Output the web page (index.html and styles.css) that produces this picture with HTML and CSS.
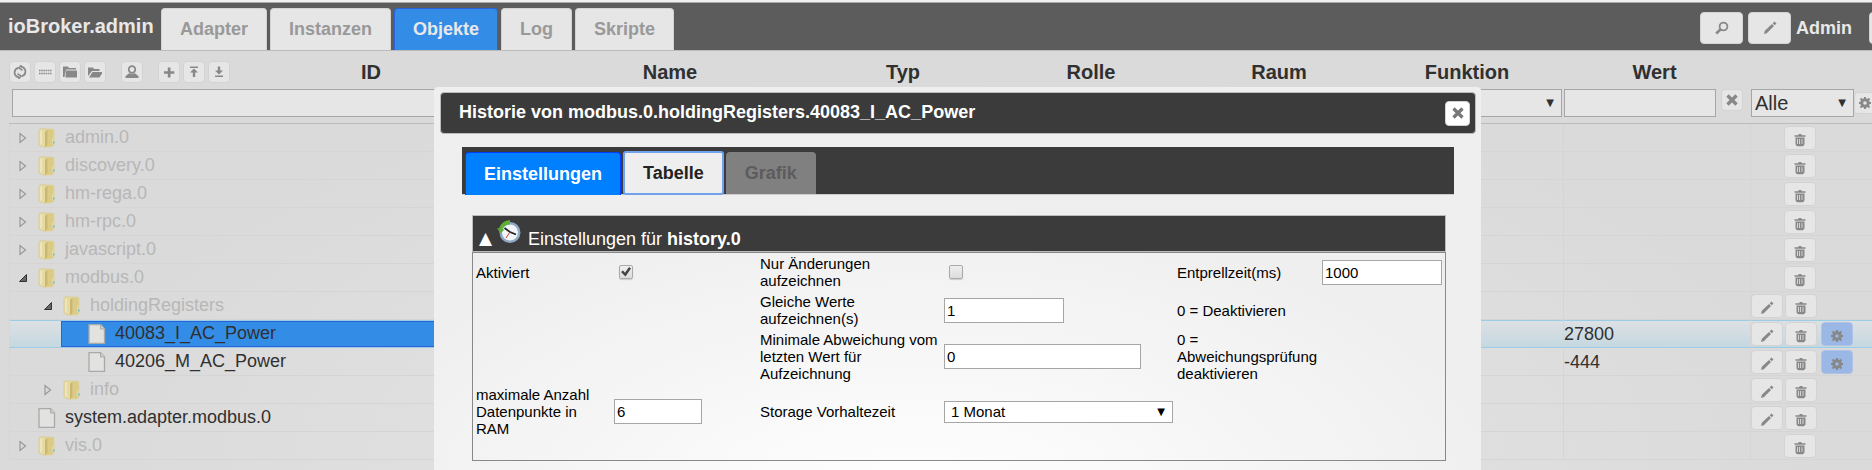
FILE: index.html
```html
<!DOCTYPE html>
<html lang="de">
<head>
    <meta charset="UTF-8">
    <meta name="viewport" content="width=device-width, initial-scale=1.0">
    <title>ioBroker.admin</title>
    <link rel="stylesheet" href="styles.css">
</head>
<body>
    <svg class="sprite" aria-hidden="true">
        <symbol id="i-refresh" viewBox="0 0 14 14"><path d="M6 12.300C2.500 11.500 1.300 9 1.700 6.500 2 4.500 3 3.300 5.500 2.900M8 1.700C11.500 2.500 12.700 5 12.300 7.500 12 9.500 11 10.700 8.500 11.100" fill="none" stroke="currentColor" stroke-width="1.700"/><path d="M8.500 0 6 2.800 9.500 5.300M5.500 14 8 11.200 4.500 8.700" fill="none" stroke="currentColor" stroke-width="1.500"/></symbol>
        <symbol id="i-list" viewBox="0 0 14 14"><path d="M1 5.500h12.500M1 8.500h12.500" stroke="currentColor" stroke-width="1.500" stroke-dasharray="1.500 .7"/></symbol>
        <symbol id="i-folder" viewBox="0 0 14 14"><path d="M0 12V1.500h5l1 1.500h7V4.500H3L1.500 12z"/><path d="M3 5.500h11v7H2.500z"/></symbol>
        <symbol id="i-open" viewBox="0 0 14 14"><path d="M0 11V2.500h5l1 1.500h5.500V6H4z"/><path d="M4.500 7H15l-3.500 5.500H1z"/></symbol>
        <symbol id="i-person" viewBox="0 0 14 14"><circle cx="7" cy="4.500" r="3.300" fill="none" stroke="currentColor" stroke-width="1.700"/><path d="M4 8.300l3 1 3-1 3.500 3V13H.500v-1.700z"/></symbol>
        <symbol id="i-plus" viewBox="0 0 14 14"><path d="M5.800 2.500h2.700v3.700h3.800v2.600H8.500v3.700H5.800V8.800H2V6.200h3.800z"/></symbol>
        <symbol id="i-up" viewBox="0 0 14 14"><path d="M3 1.500h8V3H3zM7 3.500l4 4H8.200V12H5.800V7.500H3z"/></symbol>
        <symbol id="i-down" viewBox="0 0 14 14"><path d="M3 10.500h8V12H3zM7 9.500l4-4H8.200V1.500H5.800v4H3z"/></symbol>
        <symbol id="i-search" viewBox="0 0 14 14"><circle cx="8.500" cy="5.500" r="3.900" fill="none" stroke="currentColor" stroke-width="1.800"/><path d="M5.700 8.300 1.200 12.500" stroke="currentColor" stroke-width="2.600"/></symbol>
        <symbol id="i-pencil" viewBox="0 0 14 14"><path d="M1 13l.8-3.200L9 3l2 2-7.200 7.200zM9.700 2.300 11.500.500l2 2-1.800 1.800z"/></symbol>
        <symbol id="i-trash" viewBox="0 0 14 14"><path d="M1.500 2.200h3.700L5.700 1h2.600l.5 1.200h3.700v1.500h-11z"/><path fill-rule="evenodd" d="M2.500 4.500h9v7l-1.500 1.800H4L2.500 11.500zM4 6v5h.8V6zm2.200 0v5H7V6zm2.400 0v5h.8V6z"/></symbol>
        <symbol id="i-close" viewBox="0 0 14 14"><path d="M2.500 2.500l9 9M11.500 2.500l-9 9" stroke="currentColor" stroke-width="3.300"/></symbol>
        <symbol id="i-gear" viewBox="0 0 14 14"><circle cx="7" cy="7" r="3.300" fill="none" stroke="currentColor" stroke-width="3"/><path d="M7 1v2.500M7 10.500V13M1 7h2.500M10.500 7H13M2.500 2.500l2 2M9.500 9.500l2 2M2.500 11.500l2-2M9.500 4.500l2-2" stroke="currentColor" stroke-width="2"/></symbol>
        <symbol id="i-dir" viewBox="0 0 18 20">
            <path d="M8 1h6.500Q16 1 16 3v14l-2 2H8z" fill="#dccb84" stroke="#ddd2a4"/>
            <path d="M1 2.500Q1 1 3 .800h4L9.500 2v15L7 19.500 1 17.500z" fill="#e4dba4" stroke="#dacd96"/>
            <path d="M7 3.500 9.500 2v15L7 19.500z" fill="#ccb76c"/>
            <path d="M3 2.500v14" stroke="#f0e9c3" stroke-width="1.500"/>
            <path d="M14 10.500h3v6h-3z" fill="#dcd7b0"/><path d="M15 13.500h1.500v2H15z" fill="#6cc0b5"/>
        </symbol>
        <symbol id="i-file" viewBox="0 0 18 20"><path d="M1 .500h11.500l4 4.500v14.500H1z" fill="#e2e2e0" stroke="#a9a9a7" stroke-width="1.300"/><path d="M12.500.500V5h4" fill="#cfcfcd" stroke="#a9a9a7"/></symbol>
        <symbol id="i-closed" viewBox="0 0 8 12"><path d="M1 1.500v9L6.500 6z" fill="none" stroke="#999" stroke-width="1.200"/></symbol>
        <symbol id="i-expanded" viewBox="0 0 8 12"><path d="M7.500 2.500v7H.5z" fill="#666" stroke="#333"/></symbol>
        <symbol id="i-clock" viewBox="0 0 24 24">
            <circle cx="13" cy="12.500" r="10.500" fill="#8fa9c4"/><circle cx="13" cy="12.500" r="8" fill="#f2f5f7"/>
            <path d="M13 0A12.500 12 0 0 0 2 8.500L0 8l3.500 5.500L7.500 9.300 5.300 9A8.500 8.500 0 0 1 13 4.500z" fill="#5fae35"/>
            <path d="M7.500 8 13 12l6 2.500" fill="none" stroke="#222" stroke-width="1.800"/><path d="M13 12 9 18" stroke="#c33" stroke-width="1"/>
        </symbol>
    </svg>

    <div class="menu-bar">
        <h1 class="menu-title">ioBroker.admin</h1>
        <div class="tabs">
            <button class="tab">Adapter</button>
            <button class="tab">Instanzen</button>
            <button class="tab active">Objekte</button>
            <button class="tab">Log</button>
            <button class="tab">Skripte</button>
        </div>
        <div class="menu-right">
            <button class="btn menu-btn" aria-label="Suchen"><svg><use href="#i-search"/></svg></button>
            <button class="btn menu-btn" aria-label="Bearbeiten"><svg><use href="#i-pencil"/></svg></button>
            <span class="user-name">Admin</span>
            <button class="btn menu-btn user-btn" aria-label="Abmelden"></button>
        </div>
    </div>

    <table class="objects">
        <colgroup>
            <col>
            <col class="col-name">
            <col class="col-prop">
            <col class="col-prop">
            <col class="col-prop">
            <col class="col-prop">
            <col class="col-value">
            <col class="col-actions">
        </colgroup>
        <thead>
            <tr class="titles">
                <th>
                    <div class="id-head">
                        <div class="toolbar">
                            <button class="btn tool" aria-label="Aktualisieren"><svg><use href="#i-refresh"/></svg></button>
                            <button class="btn tool" aria-label="Liste"><svg><use href="#i-list"/></svg></button>
                            <button class="btn tool" aria-label="Alle zuklappen"><svg><use href="#i-folder"/></svg></button>
                            <button class="btn tool" aria-label="Alle aufklappen"><svg><use href="#i-open"/></svg></button>
                            <button class="btn tool group" aria-label="Experte"><svg><use href="#i-person"/></svg></button>
                            <button class="btn tool group" aria-label="Neu"><svg><use href="#i-plus"/></svg></button>
                            <button class="btn tool" aria-label="Import"><svg><use href="#i-up"/></svg></button>
                            <button class="btn tool" aria-label="Export"><svg><use href="#i-down"/></svg></button>
                        </div>
                        <span class="id-title">ID</span>
                    </div>
                </th>
                <th>Name</th>
                <th>Typ</th>
                <th>Rolle</th>
                <th>Raum</th>
                <th>Funktion</th>
                <th>Wert</th>
                <th></th>
            </tr>
            <tr class="filters">
                <td class="filter-id"><input type="text" class="filter" aria-label="ID"></td>
                <td></td>
                <td></td>
                <td></td>
                <td></td>
                <td><div class="select"><select class="filter" aria-label="Funktion"><option></option></select></div></td>
                <td>
                    <div class="filter-row">
                        <input type="text" class="filter" aria-label="Wert">
                        <button class="btn tool" aria-label="Filter leeren"><svg><use href="#i-close"/></svg></button>
                    </div>
                </td>
                <td class="filter-history">
                    <div class="filter-row tight">
                        <div class="select"><select class="filter" aria-label="Historie"><option>Alle</option></select></div>
                        <button class="btn tool" aria-label="Einstellungen"><svg><use href="#i-gear"/></svg></button>
                    </div>
                </td>
            </tr>
        </thead>
        <tbody id="tree"></tbody>
    </table>

    <div class="dialog" role="dialog" aria-labelledby="dialogTitle">
        <div class="dialog-title">
            <h2 id="dialogTitle">Historie von modbus.0.holdingRegisters.40083_I_AC_Power</h2>
            <button class="btn close-btn" aria-label="Schließen"><svg><use href="#i-close"/></svg></button>
        </div>
        <div class="dialog-body">
            <div class="tabs dialog-tabs">
                <button class="tab active">Einstellungen</button>
                <button class="tab focused">Tabelle</button>
                <button class="tab" disabled>Grafik</button>
            </div>
            <div class="instance">
                <div class="instance-head">
                    <span class="fold">▲</span>
                    <svg class="clock"><use href="#i-clock"/></svg>
                    <span class="instance-name">Einstellungen für <b>history.0</b></span>
                </div>
                <form class="settings">
                    <label for="enabled" class="first">Aktiviert</label>
                    <input type="checkbox" id="enabled" checked>
                    <label for="changesOnly">Nur Änderungen aufzeichnen</label>
                    <input type="checkbox" id="changesOnly">
                    <label for="debounce">Entprellzeit(ms)</label>
                    <input type="text" class="mid" id="debounce" value="1000">

                    <label for="relog" class="third">Gleiche Werte aufzeichnen(s)</label>
                    <input type="text" class="mid" id="relog" value="1">
                    <span class="hint">0 = Deaktivieren</span>

                    <label for="minDelta" class="third">Minimale Abweichung vom letzten Wert für Aufzeichnung</label>
                    <input type="text" class="wide" id="minDelta" value="0">
                    <span class="hint">0 = Abweichungsprüfung deaktivieren</span>

                    <label for="maxLength" class="first">maximale Anzahl Datenpunkte in RAM</label>
                    <input type="text" class="small" id="maxLength" value="6">
                    <label for="retention">Storage Vorhaltezeit</label>
                    <div class="select retention">
                        <select id="retention"><option>1 Monat</option></select>
                    </div>
                </form>
            </div>
        </div>
    </div>

    <script>
        const objects = [
            { id: 'admin.0', level: 1, icon: 'closed' },
            { id: 'discovery.0', level: 1, icon: 'closed' },
            { id: 'hm-rega.0', level: 1, icon: 'closed' },
            { id: 'hm-rpc.0', level: 1, icon: 'closed' },
            { id: 'javascript.0', level: 1, icon: 'closed' },
            { id: 'modbus.0', level: 1, icon: 'expanded' },
            { id: 'holdingRegisters', level: 2, icon: 'expanded', edit: true },
            { id: '40083_I_AC_Power', level: 3, edit: true, history: true, value: '27800', selected: true },
            { id: '40206_M_AC_Power', level: 3, edit: true, history: true, value: '-444' },
            { id: 'info', level: 2, icon: 'closed', edit: true },
            { id: 'system.adapter.modbus.0', level: 1, edit: true },
            { id: 'vis.0', level: 1, icon: 'closed' }
        ];

        function button(icon, label, extra = '') {
            return `<button class="btn row-btn ${extra}" aria-label="${label}"><svg><use href="#i-${icon}"/></svg></button>`;
        }

        document.getElementById('tree').innerHTML = objects.map(obj => `
            <tr class="${obj.selected ? 'selected' : ''}">
                <td>
                    <div class="node level-${obj.level} ${obj.icon ? 'dir' : ''}">
                        <svg class="expander">${obj.icon ? `<use href="#i-${obj.icon}"/>` : ''}</svg>
                        <div class="node-title">
                            <svg class="node-icon"><use href="#i-${obj.icon ? 'dir' : 'file'}"/></svg>
                            <span>${obj.id}</span>
                        </div>
                    </div>
                </td>
                <td></td><td></td><td></td><td></td><td></td>
                <td>${obj.value || ''}</td>
                <td>
                    <div class="actions ${obj.edit ? '' : 'no-edit'}">
                        ${obj.edit ? button('pencil', 'Bearbeiten') : ''}
                        ${button('trash', 'Löschen')}
                        ${obj.history ? button('gear', 'Historie', 'history') : ''}
                    </div>
                </td>
            </tr>
        `).join('');
    </script>
</body>
</html>
```
FILE: styles.css
```css
* {
    margin: 0;
    padding: 0;
    box-sizing: border-box;
}

body {
    background: radial-gradient(ellipse 900px 400px at 50% 460px, #e5e5e5, #dadada);
    border-top: 2px solid #f0f0f0;
    color: #303030;
    font-family: "Liberation Sans", Arial, sans-serif;
    font-size: 18px;
    min-height: 100vh;
    overflow: hidden;
}

button, input, select {
    font-family: inherit;
}

.sprite {
    display: none;
}

svg {
    display: block;
    fill: currentColor;
}

/* Top menu */
.menu-bar {
    display: flex;
    align-items: flex-end;
    height: 49px;
    padding-left: 8px;
    background: #5c5c5c;
    border-top: 1px solid #aaa;
    border-bottom: 1px solid #bbb;
    overflow: hidden;
}

.menu-title {
    width: 153px;
    padding-bottom: 12px;
    font-size: 20px;
    line-height: 24px;
    color: #e8e8e8;
}

.tabs {
    display: flex;
    gap: 3px;
}

.tab {
    height: 42px;
    padding: 0 18px;
    font-size: 18px;
    font-weight: bold;
    color: #999;
    background: #e6e6e6;
    border: 1px solid #d3d3d3;
    border-bottom: none;
    border-radius: 4px 4px 0 0;
    white-space: nowrap;
}

.tab.active {
    color: #e8e8e8;
    background: #338de7;
    border-color: #2a62e0;
}

.menu-right {
    display: flex;
    align-items: center;
    gap: 5px;
    margin-left: auto;
    margin-right: -40px;
    padding-bottom: 6px;
}

.user-name {
    font-weight: bold;
    color: #e8e8e8;
}

.btn {
    display: flex;
    align-items: center;
    justify-content: center;
    flex: none;
    color: #888;
    background: #e6e6e6;
    border: 1px solid #d3d3d3;
    border-radius: 4px;
}

.btn svg {
    width: 14px;
    height: 14px;
}

.menu-btn {
    width: 43px;
    height: 32px;
}

.user-btn {
    margin-left: 12px;
}

.tool {
    width: 22px;
    height: 22px;
}

/* Object table */
.objects {
    width: calc(100% - 9px);
    margin-left: 9px;
    table-layout: fixed;
    border-collapse: separate;
    border-spacing: 0;
}

.col-name {
    width: 278px;
}

.col-prop {
    width: 188px;
}

.col-value {
    width: 187px;
}

.col-actions {
    width: 121px;
}

.titles th {
    height: 36px;
    padding: 6px 6px 0 0;
    font-size: 20px;
    line-height: 24px;
    vertical-align: middle;
}

.id-head {
    display: flex;
    align-items: center;
}

.toolbar {
    display: flex;
    gap: 3px;
}

.tool.group {
    margin-left: 12px;
}

.id-title {
    flex: 1;
    padding-right: 16px;
}

.filters td {
    height: 37px;
    padding: 2px 2px 6px 0;
    border-bottom: 1px solid #bbb;
    vertical-align: middle;
}

.filters .filter-id {
    padding-left: 3px;
}

.filters .filter-history {
    padding: 2px 0 6px;
}

.filter {
    display: block;
    width: 100%;
    height: 28px;
    padding: 0 6px;
    font-size: 20px;
    color: #303030;
    background: #e6e6e6;
    border: 1px solid #a6a6a6;
}

.filter-row {
    display: flex;
    gap: 5px;
    padding-right: 6px;
}

.filter-row.tight {
    align-items: center;
    gap: 0;
    padding: 0;
}

.filter-row.tight .select {
    flex: none;
    width: 103px;
}

.filter-row.tight .filter {
    padding: 0 3px;
}

.select {
    position: relative;
}

.select select {
    appearance: none;
    border-radius: 0;
}

.select::after {
    content: "▼";
    position: absolute;
    right: 8px;
    top: 50%;
    font-family: "DejaVu Sans", sans-serif;
    font-size: 10px;
    line-height: 12px;
    margin-top: -6px;
    pointer-events: none;
}

#tree td {
    height: 28px;
    border-right: 1px solid #d5d5d5;
    border-bottom: 1px solid #d5d5d5;
    line-height: 24px;
    vertical-align: middle;
    white-space: nowrap;
    overflow: hidden;
}

#tree td:first-child {
    border-left: 1px solid #d5d5d5;
}

#tree td:last-child {
    border-right: none;
}

#tree .selected td {
    background: linear-gradient(#dde1e4, #c5d8e0);
    border-bottom-color: #9ccde6;
    box-shadow: inset 0 1px #9ccde6;
}

.node {
    display: flex;
    align-items: center;
    height: 27px;
    padding-left: 9px;
}

.node.level-2 {
    padding-left: 34px;
}

.node.level-3 {
    padding-left: 43px;
}

.expander {
    width: 8px;
    height: 12px;
}

.node-title {
    display: flex;
    align-items: center;
    gap: 9px;
    flex: 1;
    height: 26px;
    padding-left: 10px;
    border: 1px solid transparent;
}

.node-title span {
    padding-bottom: 2px;
}

.level-3 .node-title {
    padding-left: 26px;
}

.dir .node-title {
    color: #b7b7b7;
}

.node-icon {
    width: 18px;
    height: 20px;
}

.selected .node-title {
    background: #338de7;
    border-color: #2a62d8;
}

.actions {
    display: flex;
    gap: 2px;
    padding-top: 1px;
}

.actions.no-edit {
    padding-left: 33px;
}

.row-btn {
    width: 32px;
    height: 24px;
}

.row-btn svg {
    margin-top: 3px;
}

.row-btn.history {
    margin-left: 2px;
    background: #9bb7e6;
    border-color: #b0c3e4;
}

/* History dialog */
.dialog {
    position: absolute;
    top: 87px;
    bottom: 0;
    left: 434px;
    right: 391px;
    padding: 5px 5px 0 6px;
    color: #000;
    background: radial-gradient(ellipse 600px 300px at 46% 420px, #fff, #efefef);
    border-radius: 4px 4px 0 0;
    overflow: hidden;
}

.dialog-title {
    display: flex;
    align-items: center;
    justify-content: space-between;
    height: 42px;
    padding: 0 5px 0 18px;
    background: #3b3b3b;
    border: 1px solid #bbb;
    border-radius: 4px;
}

.dialog-title h2 {
    font-size: 18px;
    line-height: 24px;
    color: #fff;
    padding-bottom: 2px;
}

.close-btn {
    width: 25px;
    height: 25px;
    color: #777;
    background: #fff;
}

.dialog-body {
    padding: 13px 22px 0;
}

.dialog-tabs {
    height: 48px;
    padding: 5px 3px 0;
    background: #3b3b3b;
    border-bottom: 1px solid #ccc;
}

.dialog-tabs .active {
    height: 43px;
    color: #fff;
    background: #007fff;
    border-color: #003eff;
}

.dialog-tabs .focused {
    color: #222;
    background: #eee;
    border-color: #eee;
    outline: 2px solid #72a2ee;
    outline-offset: -1px;
    border-radius: 2px;
}

.dialog-tabs .tab:disabled {
    color: #5c5c5c;
    background: #808080;
    border-color: #808080;
}

.instance {
    margin: 20px 8px 0 10px;
}

.instance-head {
    display: flex;
    height: 37px;
    padding: 4px 6px 2px;
    color: #fff;
    background: #3b3b3b;
    border: 1px solid #bbb;
}

.fold {
    align-self: flex-end;
    width: 18px;
    font-family: "DejaVu Sans", sans-serif;
    font-size: 17px;
    line-height: 22px;
}

.clock {
    width: 24px;
    height: 24px;
}

.instance-name {
    align-self: flex-end;
    padding-left: 7px;
    line-height: 20px;
}

.settings {
    display: grid;
    grid-template-columns:
        minmax(0, 138fr) minmax(0, 146fr) minmax(0, 184fr)
        minmax(0, 233fr) minmax(0, 145fr) minmax(0, 123fr);
    row-gap: 4px;
    align-items: center;
    justify-items: start;
    padding: 2px 0 23px 3px;
    font-size: 15px;
    line-height: 17px;
    border: 1px solid #888;
}

.settings label,
.settings .hint {
    padding-right: 3px;
}

.settings .first {
    grid-column: 1;
}

.settings .third {
    grid-column: 3;
}

.settings .hint {
    grid-column: 5;
}

.settings input[type="text"] {
    height: 25px;
    padding: 0 2px;
    font-size: 15px;
    background: #fff;
    border: 1px solid #a6a6a6;
}

.settings .small {
    width: 88px;
}

.settings .mid {
    width: 120px;
}

.settings .wide {
    width: 197px;
}

.settings input[type="checkbox"] {
    appearance: none;
    display: grid;
    place-items: center;
    width: 14px;
    height: 14px;
    margin-left: 5px;
    background: linear-gradient(#eee, #dcdcdc);
    border: 1px solid #aaa;
    border-radius: 2px;
    box-shadow: 0 1px 1px #ccc;
}

.settings input[type="checkbox"]:checked::after {
    content: "";
    width: 10px;
    height: 10px;
    background: #444;
    clip-path: polygon(0 50%, 20% 35%, 40% 58%, 80% 0, 100% 15%, 45% 95%);
}

.retention {
    width: 229px;
}

.retention select {
    display: block;
    width: 100%;
    height: 22px;
    padding: 0 6px;
    font-size: 15px;
    color: #000;
    background: #fff;
    border: 1px solid #a6a6a6;
}
```
